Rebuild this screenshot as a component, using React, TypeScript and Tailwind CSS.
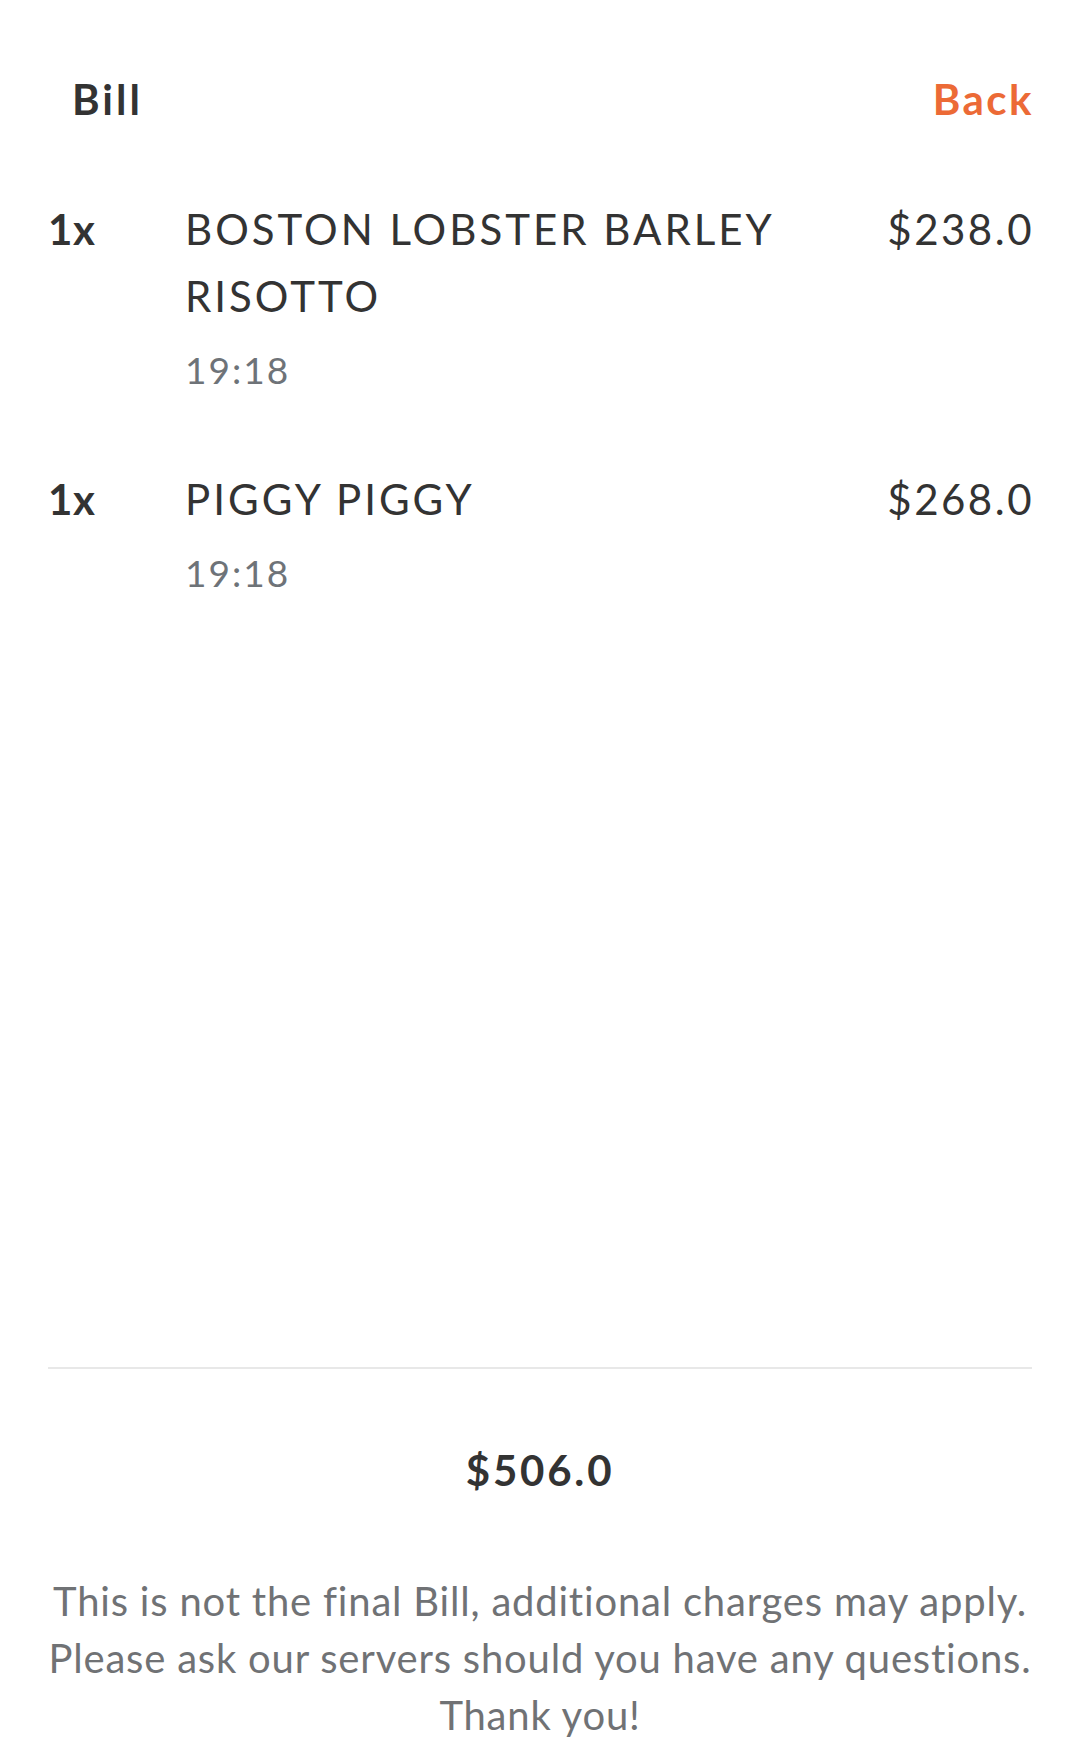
const items = [
  { qty: 1, name: "BOSTON LOBSTER BARLEY RISOTTO", time: "19:18", price: 238 },
  { qty: 1, name: "PIGGY PIGGY", time: "19:18", price: 268 },
];

export default function App() {
  const total = items.reduce((sum, item) => sum + item.price * item.qty, 0);

  return (
    <div
      className="min-h-screen bg-white flex flex-col px-[48px] text-[#333333]"
      style={{ fontFamily: "Lato, 'Noto Sans', sans-serif" }}
    >
      {/* header */}
      <div className="flex justify-between items-center pt-[74px] pl-[24px]">
        <h1 className="text-[42px] leading-[50px] font-bold tracking-[3px]">Bill</h1>
        <button className="text-[42px] leading-[50px] font-bold tracking-[2.5px] -mr-[2px] text-[#ec6a36]">
          Back
        </button>
      </div>

      {/* order lines */}
      <div className="flex flex-col gap-[71px] mt-[72px]">
        {items.map((item) => (
          <div key={item.name} className="flex items-start">
            <div className="w-[137px] shrink-0 text-[42px] leading-[67px] font-bold tracking-[0.5px]">
              {item.qty}x
            </div>
            <div className="flex-1 pr-[30px]">
              <div className="text-[42px] leading-[67px] tracking-[3px]">{item.name}</div>
              <div className="text-[37px] leading-[50px] mt-[15px] tracking-[2px] text-[#6e7378]">
                {item.time}
              </div>
            </div>
            <div className="text-[42px] leading-[67px] tracking-[2.5px] -mr-[2px] shrink-0">
              ${item.price.toFixed(1)}
            </div>
          </div>
        ))}
      </div>

      {/* summary */}
      <div className="mt-auto pb-[20px]">
        <div className="h-[2px] bg-[#e8e8e8]" />
        <div className="text-center text-[42px] leading-[50px] font-bold tracking-[2.8px] mt-[76px]">
          ${total.toFixed(1)}
        </div>
        <p className="text-center text-[40px] leading-[57px] tracking-[0.8px] text-[#707275] mt-[78px]">
          This is not the final Bill, additional charges may apply.
          <br />
          Please ask our servers should you have any questions.
          <br />
          Thank you!
        </p>
      </div>
    </div>
  );
}
